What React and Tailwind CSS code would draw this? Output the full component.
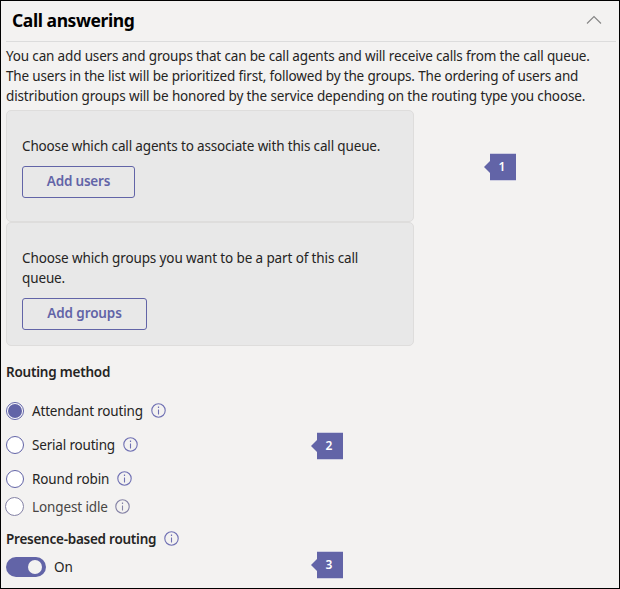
function Info({ className = "ml-[7.5px]", color = "#6f70b3" }) {
  return (
    <svg className={`${className} -mt-px size-[15px] shrink-0`} viewBox="0 0 15 15" fill="none">
      <circle cx="7.5" cy="7.5" r="6.7" stroke={color} strokeWidth="1.1" />
      <path d="M7.5 6.5v5" stroke={color} strokeWidth="1.1" />
      <path d="M7.5 3.5v1.5" stroke={color} strokeWidth="1.2" />
    </svg>
  );
}

function Callout({ n, className }) {
  return (
    <div className={`flex items-center ${className}`}>
      <svg className="h-3 w-1.5" viewBox="0 0 6 12">
        <path d="M6 0v12L0 6z" fill="#6264a7" />
      </svg>
      <div className="flex h-7 w-[26px] items-center justify-center border-y border-[#cfcfe2] bg-[#6264a7] pr-0.5 text-xs font-semibold text-white">
        {n}
      </div>
    </div>
  );
}

function Radio({ checked, label, className, labelClass, muted, children }) {
  return (
    <div className={`flex items-center ${className}`}>
      <span
        className={`flex shrink-0 items-center justify-center rounded-full border bg-white ${
          muted ? "-ml-px size-[19px] border-[#8583a6]" : "size-[18px] border-[#6264a7]"
        }`}
      >
        {checked && <span className="size-3.5 rounded-full bg-[#6264a7]" />}
      </span>
      <span className={`ml-2 whitespace-nowrap ${labelClass}`}>{label}</span>
      <Info color={muted ? "#8583a6" : "#6f70b3"} />
      {children}
    </div>
  );
}

export default function App() {
  return (
    <div className="h-[589px] w-[620px] overflow-hidden border border-black bg-[#f3f2f1] pr-[3px] pl-[5px] font-['Noto_Sans',sans-serif] text-[13.5px] leading-5 text-[#252423]">
      <header className="flex h-[41px] items-center justify-between border-b border-[#dcdcdc] pr-3.5 pb-0.5 pl-1.5">
        <h1 className="text-[17.5px] font-bold tracking-[-0.42px] text-black">Call answering</h1>
        <svg className="h-2.5 w-4" viewBox="0 0 16 10" fill="none">
          <path d="M1 8.5 8 1.5l7 7" stroke="#858585" strokeWidth="1.1" />
        </svg>
      </header>

      <div className="mt-1 whitespace-nowrap">
        <p className="tracking-[-0.16px]">You can add users and groups that can be call agents and will receive calls from the call queue.</p>
        <p className="tracking-[-0.16px]">The users in the list will be prioritized first, followed by the groups. The ordering of users and</p>
        <p className="tracking-[-0.133px]">distribution groups will be honored by the service depending on the routing type you choose.</p>
      </div>

      <div className="mt-1 flex items-start">
        <section className="h-28 w-[408px] rounded-[5px] border border-[#dedddc] bg-[#e8e8e8] px-[15px] pt-[25px] whitespace-nowrap">
          <p className="tracking-[-0.155px]">Choose which call agents to associate with this call queue.</p>
          <button className="mt-2.5 flex h-8 w-[113px] items-center justify-center rounded-[3px] border border-[#6264a7] pb-0.5 font-semibold tracking-[-0.2px] text-[#6264a7]">
            Add users
          </button>
        </section>
        <Callout n="1" className="mt-[43px] ml-[70px]" />
      </div>
      <section className="h-[124px] w-[408px] rounded-[5px] border border-[#dedddc] bg-[#e8e8e8] px-[15px] pt-[25px] tracking-[-0.12px] whitespace-nowrap">
        <p>Choose which groups you want to be a part of this call<br />queue.</p>
        <button className="mt-2.5 flex h-8 w-[125px] items-center justify-center rounded-[3px] border border-[#6264a7] pb-0.5 font-semibold tracking-[-0.1px] text-[#6264a7]">
          Add groups
        </button>
      </section>

      <h2 className="mt-4 font-semibold tracking-[-0.22px]">Routing method</h2>
      <div className="mt-3">
        <Radio checked label="Attendant routing" className="h-[34px]" labelClass="w-[111px] tracking-[-0.17px]" />
        <Radio label="Serial routing" className="h-[34px]" labelClass="w-[83px] tracking-[-0.18px]">
          <Callout n="2" className="mt-0.5 ml-[173.5px]" />
        </Radio>
        <Radio label="Round robin" className="h-[34px]" labelClass="w-[77px] tracking-[-0.12px]" />
        <Radio muted label="Longest idle" className="h-[21px]" labelClass="w-[75.5px] tracking-[-0.12px] text-[#484644]" />
      </div>

      <h2 className="mt-3 flex items-center">
        <span className="w-[150px] font-semibold tracking-[-0.25px] whitespace-nowrap">Presence-based routing</span>
        <Info />
      </h2>
      <div className="mt-2 flex h-5 items-center">
        <span className="flex h-5 w-10 items-center justify-end rounded-full bg-[#6264a7] pr-1">
          <span className="size-3.5 rounded-full bg-[#f3f2f1]" />
        </span>
        <span className="ml-2 w-5">On</span>
        <Callout n="3" className="-mt-1 ml-[237px]" />
      </div>
    </div>
  );
}
